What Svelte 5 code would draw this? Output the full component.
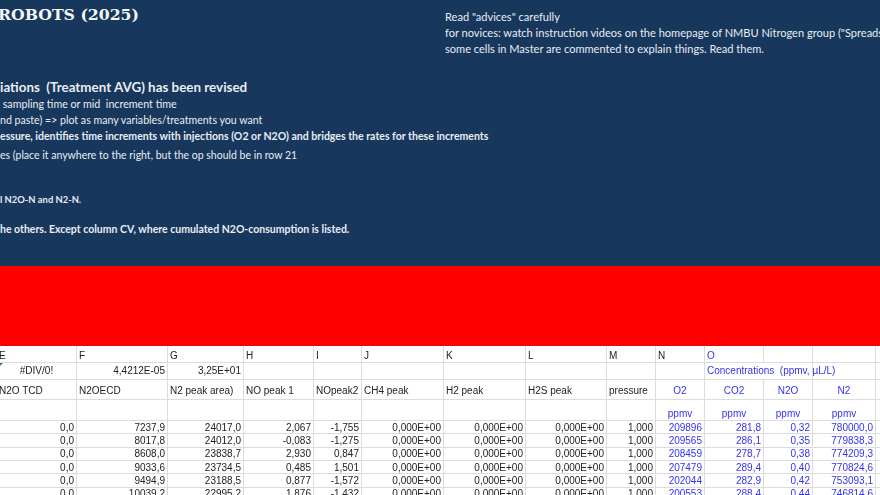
<script lang="ts">
  // Spreadsheet view: instruction banner, red band, then the first rows of the data sheet.
  const left = [
    { text: "ROBOTS (2025)", cls: "title" },
    { text: "iations  (Treatment AVG) has been revised", cls: "head" },
    { text: " sampling time or mid  increment time", cls: "l1" },
    { text: "nd paste) => plot as many variables/treatments you want", cls: "l2" },
    { text: "essure, identifies time increments with injections (O2 or N2O) and bridges the rates for these increments", cls: "b1" },
    { text: "es (place it anywhere to the right, but the op should be in row 21", cls: "l3" },
    { text: "l N2O-N and N2-N.", cls: "b2" },
    { text: "he others. Except column CV, where cumulated N2O-consumption is listed.", cls: "b3" },
  ];
  const right = [
    'Read "advices" carefully',
    'for novices: watch instruction videos on the homepage of NMBU Nitrogen group ("Spreadsheets")',
    "some cells in Master are commented to explain things. Read them.",
  ];

  const letters = ["E", "F", "G", "H", "I", "J", "K", "L", "M", "N", "O", "", "", ""];
  const names = ["N2O TCD", "N2OECD", "N2 peak area)", "NO peak 1", "NOpeak2", "CH4 peak", "H2 peak", "H2S peak", "pressure"];
  const gases = ["O2", "CO2", "N2O", "N2"];
  const zero = "0,000E+00";
  const rows = [
    ["0,0", "7237,9", "24017,0", "2,067", "-1,755", zero, zero, zero, "1,000", "209896", "281,8", "0,32", "780000,0"],
    ["0,0", "8017,8", "24012,0", "-0,083", "-1,275", zero, zero, zero, "1,000", "209565", "286,1", "0,35", "779838,3"],
    ["0,0", "8608,0", "23838,7", "2,930", "0,847", zero, zero, zero, "1,000", "208459", "278,7", "0,38", "774209,3"],
    ["0,0", "9033,6", "23734,5", "0,485", "1,501", zero, zero, zero, "1,000", "207479", "289,4", "0,40", "770824,6"],
    ["0,0", "9494,9", "23188,5", "0,877", "-1,572", zero, zero, zero, "1,000", "202044", "282,9", "0,42", "753093,1"],
    ["0,0", "10039,2", "22995,2", "1,876", "-1,432", zero, zero, zero, "1,000", "200553", "288,4", "0,44", "746814,6"],
  ];
  const isBlue = (i: number) => i >= 9;
</script>

<div class="sheet">
  <section class="banner">
    <div class="col-left">
      {#each left as line}
        <div class="line {line.cls}">{line.text}</div>
      {/each}
    </div>
    <div class="col-right">
      {#each right as line}
        <div class="rline">{line}</div>
      {/each}
    </div>
  </section>

  <div class="band"></div>

  <section class="table">
    <div class="row r-letters">
      {#each letters as l, i}
        <div class="cell" class:first={i === 0} class:blue={i === 10}>{l}</div>
      {/each}
    </div>
    <div class="row r-summary">
      <div class="cell num first err"><span class="tri"></span>#DIV/0!</div>
      <div class="cell num">4,4212E-05</div>
      <div class="cell num">3,25E+01</div>
      {#each Array(7) as _}<div class="cell"></div>{/each}
      <div class="cell blue over">Concentrations&nbsp; (ppmv, µL/L)</div>
      <div class="cell"></div><div class="cell"></div><div class="cell"></div>
    </div>
    <div class="row r-names">
      {#each names as n, i}
        <div class="cell" class:first={i === 0}>{n}</div>
      {/each}
      {#each gases as g}
        <div class="cell blue mid">{g}</div>
      {/each}
      <div class="cell"></div>
    </div>
    <div class="row r-units">
      {#each Array(9) as _}<div class="cell"></div>{/each}
      {#each gases as _}
        <div class="cell blue mid">ppmv</div>
      {/each}
      <div class="cell"></div>
    </div>
    {#each rows as row}
      <div class="row r-data">
        {#each row as v, i}
          <div class="cell num" class:blue={isBlue(i)}>{v}</div>
        {/each}
        <div class="cell"></div>
      </div>
    {/each}
  </section>
</div>

<style>
  :global(body) {
    margin: 0;
    background: #fff;
  }
  .sheet {
    width: 880px;
    height: 495px;
    overflow: hidden;
    filter: blur(0.4px);
  }

  .banner {
    height: 266px;
    background: #17375d;
    display: grid;
    grid-template-columns: 446px 434px;
    color: #e9edf2;
    font-family: Lato, "Liberation Sans", sans-serif;
    overflow: hidden;
  }
  .line,
  .rline {
    white-space: pre;
    font-size: 11px;
    line-height: 16px;
  }
  .title {
    font-family: "DejaVu Serif", serif;
    font-weight: 700;
    font-size: 15.7px;
    line-height: 20px;
    margin: 5px 0 0 -2px;
    color: #f4f6f8;
  }
  .head {
    font-size: 13.4px;
    font-weight: 700;
    margin-top: 54px;
  }
  .l1 {
    font-size: 10.7px;
    margin-top: 1px;
  }
  .l2 {
    font-size: 10.6px;
  }
  .b1 {
    font-weight: 700;
    font-size: 10.55px;
  }
  .l3 {
    font-size: 10.5px;
    margin-top: 3px;
  }
  .b2 {
    font-weight: 700;
    font-size: 9.4px;
    margin-top: 29px;
  }
  .b3 {
    font-weight: 700;
    font-size: 10.5px;
    margin-top: 13px;
  }
  .col-right {
    padding-top: 9px;
    overflow: hidden;
    margin-left: -1px;
  }
  .rline {
    font-size: 11.05px;
  }

  .band {
    height: 80px;
    background: #ff0000;
  }

  .table {
    font-family: "Liberation Sans", Arial, sans-serif;
    font-size: 10px;
    color: #222;
  }
  .row {
    display: grid;
    grid-template-columns: 77px 91px 76px 70px 48px 82px 82px 81px 49px 49px 59px 49px 63px 20px;
    border-bottom: 1px solid #dcdcdc;
    box-sizing: border-box;
  }
  .r-letters {
    height: 17px;
  }
  .r-letters .cell {
    padding-top: 2px;
  }
  .r-summary {
    height: 17px;
  }
  .r-summary .cell {
    padding-bottom: 2px;
  }
  .r-names {
    height: 20px;
  }
  .r-names .cell {
    padding-top: 2px;
  }
  .r-units {
    height: 21px;
  }
  .r-data {
    height: 13.33px;
  }
  .cell {
    border-right: 1px solid #dcdcdc;
    padding: 0 2px;
    display: flex;
    align-items: center;
    white-space: nowrap;
    min-width: 0;
    position: relative;
  }
  .first {
    padding-left: 0;
    margin-left: -1px;
  }
  .num {
    justify-content: flex-end;
  }
  .err {
    justify-content: center;
  }
  .mid {
    justify-content: center;
  }
  .blue {
    color: #3333ee;
  }
  .over {
    overflow: visible;
    z-index: 1;
    border-right-color: transparent;
  }
  .r-units .cell {
    align-items: flex-end;
    padding-bottom: 1px;
  }
  .tri {
    position: absolute;
    left: 1px;
    top: 0;
    width: 0;
    height: 0;
    border-top: 3px solid #2e8b2e;
    border-right: 3px solid transparent;
  }
</style>
